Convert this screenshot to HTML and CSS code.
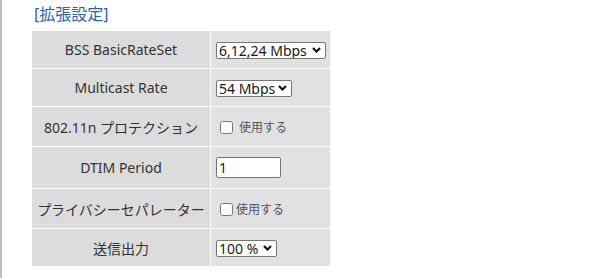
FILE: index.html
```html
<!DOCTYPE html>
<html lang="ja">
<head>
    <meta charset="UTF-8">
    <title>拡張設定</title>
    <link rel="stylesheet" href="styles.css">
</head>
<body>
    <div class="page">
        <h2 class="section-title">[拡張設定]</h2>
        <table class="setting-table">
            <tr class="row-a">
                <th>BSS BasicRateSet</th>
                <td>
                    <span class="select-wrap">
                        <select class="sel-rate">
                            <option>6,12,24 Mbps</option>
                        </select>
                        <svg class="chev" width="9" height="6" viewBox="0 0 9 6"><polyline points="1,1 4.5,4.5 8,1" fill="none" stroke="#111" stroke-width="2.2"/></svg>
                    </span>
                </td>
            </tr>
            <tr class="row-a">
                <th>Multicast Rate</th>
                <td>
                    <span class="select-wrap">
                        <select class="sel-mcast">
                            <option>54 Mbps</option>
                        </select>
                        <svg class="chev" width="9" height="6" viewBox="0 0 9 6"><polyline points="1,1 4.5,4.5 8,1" fill="none" stroke="#111" stroke-width="2.2"/></svg>
                    </span>
                </td>
            </tr>
            <tr class="row-check">
                <th>802.11n プロテクション</th>
                <td><label><input type="checkbox"> 使用する</label></td>
            </tr>
            <tr class="row-input">
                <th>DTIM Period</th>
                <td><input type="text" class="txt-dtim" value="1"></td>
            </tr>
            <tr class="row-check">
                <th>プライバシーセパレーター</th>
                <td><label><input type="checkbox">使用する</label></td>
            </tr>
            <tr class="row-a">
                <th>送信出力</th>
                <td>
                    <span class="select-wrap">
                        <select class="sel-power">
                            <option>100 %</option>
                        </select>
                        <svg class="chev" width="9" height="6" viewBox="0 0 9 6"><polyline points="1,1 4.5,4.5 8,1" fill="none" stroke="#111" stroke-width="2.2"/></svg>
                    </span>
                </td>
            </tr>
        </table>
    </div>
</body>
</html>
```

FILE: styles.css
```css
body, html {
    margin: 0;
    padding: 0;
    background-color: #ffffff;
    font-family: "Noto Sans", "Noto Sans CJK JP", sans-serif;
    color: #333333;
    height: 100%;
}
.page {
    border-left: 2px solid #bdbdbd;
    min-height: 100%;
    padding: 4px 0 0 29px;
    box-sizing: border-box;
}
.section-title {
    margin: 0 0 5px 3px;
    font-size: 16px;
    font-weight: normal;
    line-height: 21px;
    color: #2f5fae;
}
.setting-table {
    border-spacing: 1px;
    table-layout: fixed;
    width: 300px;
    font-size: 14px;
}
.setting-table th,
.setting-table td {
    box-sizing: border-box;
    padding: 0;
}
.setting-table th {
    width: 178px;
    font-weight: normal;
    text-align: center;
    background-color: #dcdcdc;
}
.setting-table td {
    width: 119px;
    background-color: #e1e1e1;
    padding-left: 5px;
}
.row-a th, .row-a td { height: 37px; }
.row-check th, .row-check td { height: 39px; }
.row-input th, .row-input td { height: 41px; }

.select-wrap {
    position: relative;
    display: inline-block;
    vertical-align: middle;
}
select {
    -webkit-appearance: none;
    appearance: none;
    display: block;
    font-family: "Noto Sans", sans-serif;
    font-size: 14px;
    line-height: 15px;
    color: #1a1a1a;
    height: 17px;
    padding: 0 14px 0 2px;
    border: 1px solid #767676;
    border-radius: 2px;
    background-color: #ffffff;
    box-sizing: border-box;
}
.chev {
    position: absolute;
    right: 5px;
    top: 5px;
    pointer-events: none;
}
.sel-rate { width: 110px; }
.sel-mcast { width: 76px; }
.sel-power { width: 61px; }
.txt-dtim {
    display: block;
    width: 65px;
    height: 21px;
    box-sizing: border-box;
    font-family: "Noto Sans", sans-serif;
    font-size: 14px;
    color: #1a1a1a;
    padding: 0 2px;
    border: 1px solid #767676;
    border-radius: 2px;
}
label {
    color: #4b5563;
    font-size: 12px;
}
input[type="checkbox"] {
    margin: 0 3px 0 4px;
    width: 13px;
    height: 13px;
    vertical-align: -2px;
}
```
